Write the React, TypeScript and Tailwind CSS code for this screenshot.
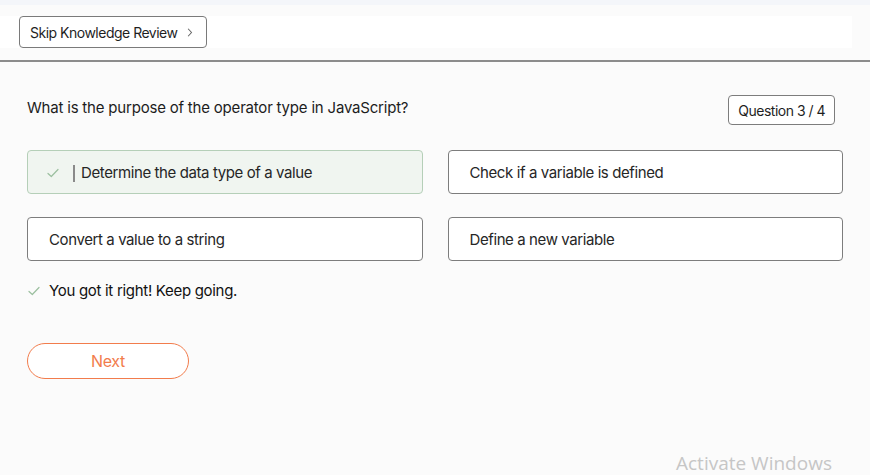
import React from "react";

const Check = ({ className }: { className?: string }) => (
  <svg viewBox="0 0 12 10" className={className} fill="none" stroke="currentColor" strokeWidth="1.2" strokeLinecap="round" strokeLinejoin="round">
    <path d="M1 5.5 L4.3 8.5 L11 1.5" />
  </svg>
);

const Option = ({ text, selected }: { text: string; selected?: boolean }) => (
  <div
    className={
      selected
        ? "h-[44px] flex items-center rounded-[4px] border border-[#b5cfb8] bg-[#f0f5f0] pl-[19px] pt-[2px]"
        : "h-[44px] flex items-center rounded-[4px] border border-[#7d7d7d] bg-white pl-[21px] pt-[2px]"
    }
  >
    {selected && (
      <>
        <Check className="w-[12px] h-[10px] text-[#9bbf9f] mr-[14px]" />
        <span className="w-[2px] h-[17px] bg-[#8a8a8a] mr-[6px]" />
      </>
    )}
    <span className="text-[15px] text-[#262626] tracking-[-0.4px]">{text}</span>
  </div>
);

export default function App() {
  return (
    <div
      className="w-[870px] h-[475px] bg-[#fbfbfb] relative overflow-hidden"
      style={{ fontFamily: "Inter, 'Liberation Sans', sans-serif" }}
    >
      <div className="h-[5px] bg-[#f4f6fa]" />
      <div className="pt-[11px] pb-[12px]">
        <div className="w-[852px] bg-white pl-[19px]">
          <button className="h-[32px] pl-[10px] pr-[13px] flex items-center gap-[10px] rounded-[4px] border border-[#7a7a7a] bg-white text-[14px] text-[#1f1f1f] tracking-[-0.5px]">
            Skip Knowledge Review
            <svg viewBox="0 0 8 12" className="w-[6px] h-[9px] text-[#666]" fill="none" stroke="currentColor" strokeWidth="1.4">
              <path d="M1.5 1 L6 6 L1.5 11" />
            </svg>
          </button>
        </div>
      </div>
      <div className="h-[2px] bg-[#8c8c8c]" />
      <div className="pl-[27px] pr-[27px]">
        <div className="flex justify-between items-start pt-[34px]">
          <div className="text-[15px] text-[#1d1d1d] tracking-[-0.2px] mt-[1px]">
            What is the purpose of the operator type in JavaScript?
          </div>
          <div className="h-[30px] px-[9px] mr-[8px] -mt-[1px] flex items-center rounded-[4px] border border-[#7d7d7d] bg-white text-[14px] text-[#1f1f1f] tracking-[-0.5px]">
            Question 3 / 4
          </div>
        </div>
        <div className="grid grid-cols-2 gap-x-[25px] gap-y-[23px] mt-[25px]">
          <Option text="Determine the data type of a value" selected />
          <Option text="Check if a variable is defined" />
          <Option text="Convert a value to a string" />
          <Option text="Define a new variable" />
        </div>
        <div className="flex items-center mt-[20px] h-[20px]">
          <Check className="w-[12px] h-[10px] text-[#9bbf9f] ml-[1px] mr-[9px]" />
          <span className="text-[15px] text-[#111] tracking-[-0.3px]">You got it right! Keep going.</span>
        </div>
        <button className="mt-[42px] w-[162px] h-[36px] rounded-full border border-[#f27c4c] bg-white text-[16px] text-[#f27c4c] tracking-[-0.3px] flex items-center justify-center">
          Next
        </button>
      </div>
      <div
        className="absolute left-[676px] top-[451px] text-[19px] leading-[24px] text-[#c6c6c6]"
        style={{ fontFamily: "'Open Sans', 'Noto Sans', sans-serif" }}
      >
        Activate Windows
      </div>
    </div>
  );
}
